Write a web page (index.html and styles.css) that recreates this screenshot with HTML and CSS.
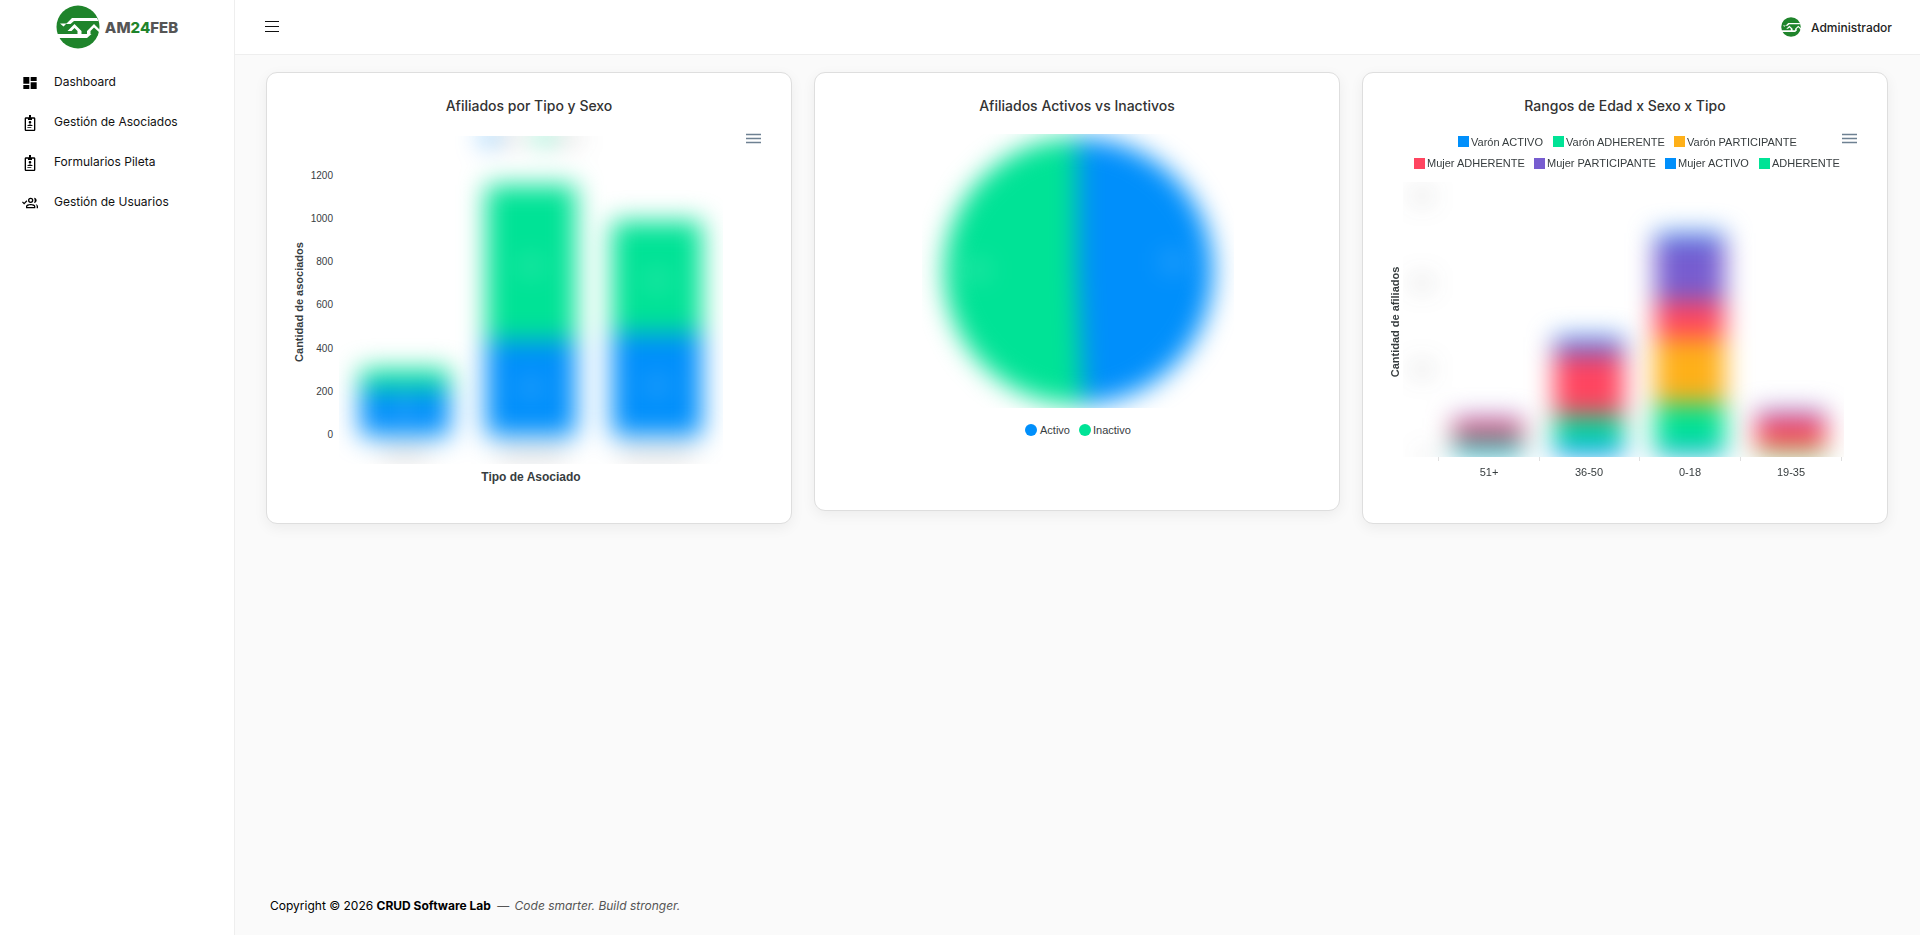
FILE: index.html
```html
<!DOCTYPE html>
<html lang="es">
<head>
  <meta charset="UTF-8">
  <meta name="viewport" content="width=device-width, initial-scale=1.0">
  <title>AM24FEB - Dashboard</title>
  <link rel="stylesheet" href="styles.css">
</head>
<body>
  <svg class="defs" width="0" height="0" aria-hidden="true">
    <symbol id="logo" viewBox="0 0 44 44">
      <circle cx="22" cy="22" r="21.5" fill="#1f842b"/>
      <path fill="#fff" d="M16 13H41L42.500 16H18L14.500 19H10ZM4 18.500H10.500L7.500 21.500ZM11.500 26L18.500 19L25.500 26V29H21.500V26L18.500 23L15.500 26ZM31 26L38 19L44 25V28L38 22.500L34.500 26V29H31ZM0.500 29H35.500L31 33H2.500Z"/>
    </symbol>
    <symbol id="badge" viewBox="0 0 24 24">
      <path fill-rule="evenodd" d="M12 9a2 2 0 1 1 0 4 2 2 0 0 1 0-4zM8 16.500c0-1.500 2.500-2.300 4-2.300s4 .8 4 2.300zM8 18.300h6v1.200H8zM18 3.500h-4.500V0h-3v3.500H6c-1.100 0-2 .9-2 2V22c0 1.100.9 2 2 2h12c1.100 0 2-.9 2-2V5.500c0-1.100-.9-2-2-2zM18 22H6V5.500h3v2h6v-2h3z"/>
    </symbol>
  </svg>

  <div class="layout">
    <aside class="sidebar">
      <a href="#" class="brand">
        <svg class="brand-logo"><use href="#logo"/></svg>
        <span>AM<b>24</b>FEB</span>
      </a>
      <nav class="menu">
        <a href="#">
          <svg viewBox="0 0 24 24"><path d="M2 13h9V3H2zm0 8h9v-6H2zm11 0h9V11h-9zm0-18v6h9V3z"/></svg>
          <span>Dashboard</span>
        </a>
        <a href="#">
          <svg viewBox="0 0 24 24"><use href="#badge"/></svg>
          <span>Gestión de Asociados</span>
        </a>
        <a href="#">
          <svg viewBox="0 0 24 24"><use href="#badge"/></svg>
          <span>Formularios Pileta</span>
        </a>
        <a href="#">
          <svg viewBox="0 0 24 24"><path fill-rule="evenodd" d="M0 11l1.300-1.300 1.900 1.900L6.700 8 8 9.300l-4.800 4.800zM13 4a4 4 0 1 1 0 8 4 4 0 0 1 0-8zm0 2a2 2 0 1 0 0 4 2 2 0 0 0 0-4zM6 20v-3c0-2.300 3.500-3.500 7-3.500s7 1.200 7 3.500v3zm2-2h10v-1c0-.6-2.500-1.600-5-1.600S8 16.400 8 17zM18 4c2.200 0 4 1.800 4 4s-1.800 4-4 4c1.300-2.400 1.300-5.600 0-8zM20.500 14c2 .5 3.500 1.600 3.500 3.300V20h-2v-2.700c0-1.400-.5-2.500-1.500-3.300z"/></svg>
          <span>Gestión de Usuarios</span>
        </a>
      </nav>
    </aside>

    <div class="page">
      <header class="topbar">
        <button class="toggle" aria-label="Menú">
          <svg viewBox="0 0 14 12"><path d="M0 .5h14M0 5.500h14M0 10.500h14"/></svg>
        </button>
        <a href="#" class="user">
          <svg class="avatar"><use href="#logo"/></svg>
          <span>Administrador</span>
        </a>
      </header>

      <main class="cards">
        <section class="card">
          <h2>Afiliados por Tipo y Sexo</h2>
          <svg class="chart" viewBox="0 0 476 368">
            <clipPath id="clip1"><rect x="48" y="5" width="384" height="328"/></clipPath>
            <g clip-path="url(#clip1)">
              <g class="soft">
                <rect x="192" y="0" width="12" height="12" class="blue"/>
                <rect x="247" y="0" width="12" height="12" class="green"/>
                <path class="shade" d="M207 2h28v8h-28zM262 2h28v8h-28zM90 319h48v8H90zM208 319h66v8h-66zM330 319h72v8h-72z"/>
                <path class="blue" d="M69 258h90v47H69zM195 209h90v96h-90zM321 202h90v103h-90z"/>
                <path class="green" d="M69 238h90v20H69zM195 54h90v155h-90zM321 90h90v112h-90z"/>
                <path class="glow" d="M104 270h20v10h-20zM230 130h20v10h-20zM356 144h20v10h-20zM230 252h20v10h-20zM356 250h20v10h-20z"/>
              </g>
            </g>
            <g class="ticks">
              <text x="42" y="48">1200</text>
              <text x="42" y="91">1000</text>
              <text x="42" y="134">800</text>
              <text x="42" y="177">600</text>
              <text x="42" y="221">400</text>
              <text x="42" y="264">200</text>
              <text x="42" y="307">0</text>
            </g>
            <text class="axis-title side" transform="translate(12 171) rotate(-90)">Cantidad de asociados</text>
            <text class="axis-title" x="240" y="350">Tipo de Asociado</text>
            <path class="burger" d="M455 3.500h15M455 7.500h15M455 11.500h15"/>
          </svg>
        </section>

        <section class="card">
          <h2>Afiliados Activos vs Inactivos</h2>
          <svg class="chart" viewBox="0 0 476 355">
            <clipPath id="clip2"><rect x="83" y="3" width="312" height="274"/></clipPath>
            <g clip-path="url(#clip2)">
              <g class="soft">
                <circle cx="238" cy="140" r="133" class="green"/>
                <path class="blue" d="M238 7A133 133 0 0 1 244 273L238 140z"/>
                <path class="glow" d="M324 126h22v10h-22zM126 134h22v10h-22z"/>
              </g>
            </g>
            <circle cx="192" cy="299" r="6" class="blue"/>
            <circle cx="246" cy="299" r="6" class="green"/>
            <g class="legend">
              <text x="201" y="303">Activo</text>
              <text x="254" y="303">Inactivo</text>
            </g>
          </svg>
        </section>

        <section class="card">
          <h2>Rangos de Edad x Sexo x Tipo</h2>
          <svg class="chart" viewBox="0 0 476 368">
            <clipPath id="clip3"><rect x="16" y="51" width="441" height="275"/></clipPath>
            <g clip-path="url(#clip3)">
              <g class="soft">
                <path class="shade" d="M26 61h18v8H26zM26 148h18v8H26zM26 234h18v8H26zM34 321h10v8H34z"/>
                <path class="blue" d="M66 318h70v6H66zM167 312h70v13h-70zM268 318h70v7h-70zM268 102h70v6h-70zM167 206h70v5h-70z"/>
                <path class="green" d="M66 309h70v9H66zM167 285h70v27h-70zM268 273h70v45h-70zM369 320h70v5h-70z"/>
                <path class="orange" d="M268 207h70v66h-70zM369 315h70v5h-70z"/>
                <path class="red" d="M66 294h70v15H66zM167 224h70v61h-70zM268 170h70v37h-70zM369 288h70v27h-70z"/>
                <path class="purple" d="M66 287h70v7H66zM167 211h70v13h-70zM268 108h70v62h-70zM369 280h70v8h-70z"/>
              </g>
            </g>
            <path class="marks" d="M51.500 326v4M152.500 326v4M252.500 326v4M353.500 326v4M454.500 326v4"/>
            <rect x="71" y="5" width="11" height="11" class="blue"/>
            <rect x="166" y="5" width="11" height="11" class="green"/>
            <rect x="287" y="5" width="11" height="11" class="orange"/>
            <rect x="27" y="27" width="11" height="11" class="red"/>
            <rect x="147" y="27" width="11" height="11" class="purple"/>
            <rect x="278" y="27" width="11" height="11" class="blue"/>
            <rect x="372" y="27" width="11" height="11" class="green"/>
            <g class="legend">
              <text x="84" y="15">Varón ACTIVO</text>
              <text x="179" y="15">Varón ADHERENTE</text>
              <text x="300" y="15">Varón PARTICIPANTE</text>
              <text x="40" y="36">Mujer ADHERENTE</text>
              <text x="160" y="36">Mujer PARTICIPANTE</text>
              <text x="291" y="36">Mujer ACTIVO</text>
              <text x="385" y="36">ADHERENTE</text>
            </g>
            <g class="legend ranges">
              <text x="102" y="345">51+</text>
              <text x="202" y="345">36-50</text>
              <text x="303" y="345">0-18</text>
              <text x="404" y="345">19-35</text>
            </g>
            <text class="axis-title side" transform="translate(12 191) rotate(-90)">Cantidad de afiliados</text>
            <path class="burger" d="M455 3.500h15M455 7.500h15M455 11.500h15"/>
          </svg>
        </section>
      </main>

      <footer class="footer">
        Copyright © 2026 <strong>CRUD Software Lab</strong> <span>— <em>Code smarter. Build stronger.</em></span>
      </footer>
    </div>
  </div>
</body>
</html>
```

FILE: styles.css
```css
* {
  box-sizing: border-box;
}
body {
  margin: 0;
  background: #fafafa;
  font-family: Inter, sans-serif;
  font-size: 12px;
  color: #111;
}
a {
  color: inherit;
  text-decoration: none;
}
.defs {
  position: absolute;
}
.layout {
  display: flex;
  min-height: 100vh;
}

/* Sidebar */
.sidebar {
  flex: 0 0 235px;
  background: #fff;
  border-right: 1px solid #eee;
}
.brand {
  display: flex;
  align-items: center;
  justify-content: center;
  gap: 5px;
  height: 54px;
  font-size: 15px;
  font-weight: 800;
  color: #555;
}
.brand b {
  font-weight: 800;
  color: #1f842b;
}
.brand-logo {
  width: 44px;
  height: 44px;
}
.menu {
  padding-top: 7px;
}
.menu a {
  display: flex;
  align-items: center;
  gap: 16px;
  height: 40px;
  padding-left: 22px;
}
.menu svg {
  width: 16px;
  height: 16px;
  margin-top: 4px;
}

/* Header */
.page {
  flex: 1;
  display: flex;
  flex-direction: column;
  min-width: 0;
}
.topbar {
  display: flex;
  align-items: center;
  justify-content: space-between;
  height: 55px;
  padding: 0 28px 0 30px;
  background: #fff;
  border-bottom: 1px solid #eee;
}
.toggle {
  padding: 0;
  border: none;
  background: none;
  cursor: pointer;
}
.toggle svg {
  display: block;
  width: 14px;
  height: 12px;
  stroke: #111;
  stroke-width: 1;
}
.user {
  display: flex;
  align-items: center;
  gap: 10px;
  font-weight: 500;
  color: #222;
}
.avatar {
  width: 20px;
  height: 20px;
}

/* Cards */
.cards {
  flex: 1;
  display: grid;
  grid-template-columns: repeat(3, 1fr);
  align-items: start;
  gap: 22px;
  padding: 17px 32px 17px 31px;
}
.card {
  padding: 24px;
  background: #fff;
  border: 1px solid #dedede;
  border-radius: 11px;
  box-shadow: 0 4px 14px rgba(0, 0, 0, 0.06);
}
.card h2 {
  margin: 0 0 16px;
  font-size: 14px;
  line-height: 18px;
  font-weight: 500;
  text-align: center;
  color: #333;
}

/* Charts */
.chart {
  display: block;
  width: 100%;
  font-family: "Liberation Sans", Arial, sans-serif;
  font-size: 11px;
  fill: #373d3f;
}
.soft {
  filter: blur(13px);
}
.blue { fill: #008ffb; }
.green { fill: #00e396; }
.orange { fill: #feb019; }
.red { fill: #ff4560; }
.purple { fill: #775dd0; }
.shade {
  fill: #373d3f;
  opacity: 0.3;
}
.glow {
  fill: #fff;
  opacity: 0.3;
}
.ticks {
  font-size: 10px;
  text-anchor: end;
}
.axis-title {
  font-size: 12px;
  font-weight: 700;
  text-anchor: middle;
}
.axis-title.side {
  font-size: 11px;
}
.ranges {
  text-anchor: middle;
}
.burger {
  stroke: #6e8192;
  stroke-width: 1.5;
}
.marks {
  stroke: #e0e0e0;
}

.footer {
  padding: 0 35px 21px;
  line-height: 16px;
  color: #000;
}
.footer span {
  margin-left: 3px;
  color: #555;
}
.footer em {
  margin-left: 2px;
}
```
